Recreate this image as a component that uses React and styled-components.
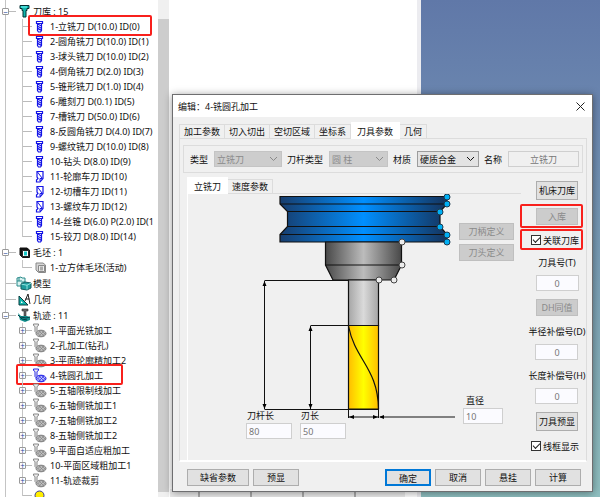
import React from 'react'
import styled, { createGlobalStyle, css } from 'styled-components'

const tools = [
  '1-立铣刀 D(10.0) ID(0)',
  '2-圆角铣刀 D(10.0) ID(1)',
  '3-球头铣刀 D(10.0) ID(2)',
  '4-倒角铣刀 D(2.0) ID(3)',
  '5-锥形铣刀 D(1.0) ID(4)',
  '6-雕刻刀 D(0.1) ID(5)',
  '7-槽铣刀 D(50.0) ID(6)',
  '8-反圆角铣刀 D(4.0) ID(7)',
  '9-螺纹铣刀 D(10.0) ID(8)',
  '10-钻头 D(8.0) ID(9)',
  '11-轮廓车刀 ID(10)',
  '12-切槽车刀 ID(11)',
  '13-螺纹车刀 ID(12)',
  '14-丝锥 D(6.0) P(2.0) ID(1',
  '15-铰刀 D(8.0) ID(14)'
]

const paths = [
  '1-平面光铣加工',
  '2-孔加工(钻孔)',
  '3-平面轮廓精加工2',
  '4-铣圆孔加工',
  '5-五轴限制线加工',
  '6-五轴侧铣加工1',
  '7-五轴侧铣加工2',
  '8-五轴侧铣加工2',
  '9-平面自适应粗加工',
  '10-平面区域粗加工1',
  '11-轨迹裁剪'
]

const holderDots = [[447, 197], [447, 204], [440, 212], [440, 227], [447, 235], [447, 242]]
const chuckDots = [[402, 242], [402, 265], [394, 280], [379, 280]]

// Icons
const HolderIcon = () => (
  <svg width="13" height="15" viewBox="0 0 13 15">
    <path d="M2 1.500h9v3H9v2H8v6.500H5V6.500H4v-2H2z" fill="#12b5ad" stroke="#042f33" />
    <path d="M3 3h6" stroke="#7ff" />
  </svg>
)

const MillIcon = () => (
  <svg width="11" height="13" viewBox="0 0 11 13">
    <path d="M2.500 1.500h6v2h-6zM3.500 3.500v7l1 1.500h2l1-1.500v-7" fill="#fff" stroke="#1414e6" strokeWidth="1.200" />
    <path d="M3.500 4l4 2M3.500 6.200l4 2M3.500 8.400l4 2" stroke="#1414e6" strokeWidth="1.200" />
  </svg>
)

const LatheIcon = () => (
  <svg width="11" height="13" viewBox="0 0 11 13">
    <path d="M3 1.500h6v7l-3 3.500H2.500v-2L4 8.500 3 7z" fill="#fff" stroke="#1414e6" strokeWidth="1.200" />
    <path d="M3.500 2l4.500 6M6 11V8.500h2.500" fill="none" stroke="#1414e6" />
  </svg>
)

const BlankIcon = ({ muted }) => (
  <svg width="13" height="13" viewBox="0 0 13 13">
    <path d="M2 2h7l2.500 2v7.500h-7L2 9z" fill={muted ? '#d6d6d6' : '#111'} stroke={muted ? '#888' : '#111'} />
    <path d="M4.500 4.500h6v6h-6z" fill={muted ? '#eee' : '#fff'} stroke={muted ? '#888' : '#222'} />
    <path d="M6 5.500h3v4H6z" fill={muted ? '#aaa' : '#17c8c8'} />
  </svg>
)

const ModelIcon = () => (
  <svg width="16" height="15" viewBox="0 0 16 15">
    <path d="M1 2l4-1 1 1h3v4H6v4H1z" fill="#d9f3f1" stroke="#2a8a8a" />
    <path d="M1 5h5M3 2v3" stroke="#2a8a8a" />
    <path d="M5 8l4-2 6 1v5l-4 2-6-1z" fill="#1d9c9c" stroke="#175e62" />
    <path d="M5.500 8.200l5.500 1 4-2M11 9v4.500" fill="none" stroke="#8fe3df" />
  </svg>
)

const GeometryIcon = () => (
  <svg width="13" height="13" viewBox="0 0 13 13">
    <path d="M1 3v9h9z" fill="#12b5ad" stroke="#063a3d" />
    <path d="M3 8v2h2z" fill="#fff" />
    <path d="M10 1L7 8M10 1l2 10M7.500 6h4" stroke="#222" fill="none" />
  </svg>
)

const PathRootIcon = () => (
  <svg width="14" height="15" viewBox="0 0 14 15">
    <path d="M5 1h6v2H9v5H7V3H5z" fill="#666" stroke="#333" strokeWidth=".6" />
    <path d="M1 5l3 3h6l3 1v3l-5 2-5-2z" fill="#128f8d" />
    <path d="M1 7l4 4 5 1M4 9l5 1 4-1" stroke="#053f45" fill="none" />
  </svg>
)

const PathIcon = ({ active }) => {
  const color = active ? '#1414e6' : '#7c7c7c'
  return (
    <svg width="15" height="15" viewBox="0 0 15 15">
      <path d="M1.500 1h5v1.500l-1.500 1v5l-1 1-1-1v-5l-1.500-1z" fill="#eee" stroke={color} strokeWidth=".9" />
      <ellipse cx="9" cy="10.500" rx="5" ry="3.300" fill={active ? '#b9bdf8' : '#bdbdbd'} stroke={color} />
      <path d="M5 9.500l4 4M7 8l5 5M9.500 7.500l4 4M5 11.500l4-4M7 13l5-5M10 13.500l3-3" stroke={color} strokeWidth=".6" />
    </svg>
  )
}

const Chevron = () => (
  <svg width="9" height="6" viewBox="0 0 9 6">
    <path d="M1 1l3.500 3.500L8 1" fill="none" stroke="currentColor" />
  </svg>
)

const ToolDrawing = () => (
  <svg width="270" height="228" viewBox="188 194 270 228" role="img" aria-label="立铣刀">
    <defs>
      <linearGradient id="holder">
        <stop offset="0" stopColor="#173d6e" />
        <stop offset=".5" stopColor="#008fff" />
        <stop offset="1" stopColor="#15335c" />
      </linearGradient>
      <linearGradient id="chuck">
        <stop offset="0" stopColor="#484848" />
        <stop offset=".5" stopColor="#bcbcbc" />
        <stop offset="1" stopColor="#484848" />
      </linearGradient>
      <linearGradient id="shank">
        <stop offset="0" stopColor="#a6a6a6" />
        <stop offset=".5" stopColor="#dadada" />
        <stop offset="1" stopColor="#a6a6a6" />
      </linearGradient>
      <linearGradient id="flute">
        <stop offset="0" stopColor="#ffbe00" />
        <stop offset=".5" stopColor="#ffff00" />
        <stop offset="1" stopColor="#ffbe00" />
      </linearGradient>
    </defs>
    <g stroke="#111" strokeWidth="1.200">
      <path d="M280 196.500H447V204L440 211.500V226.500L447 234.500V242H280V234.500L287.500 226.500V211.500L280 204Z" fill="url(#holder)" />
      <path d="M280 204H447M287.500 211.500H440M287.500 226.500H440M280 234.500H447" />
      <path d="M325.500 242H401.500V265L394 280H333L325.500 265Z" fill="url(#chuck)" />
      <path d="M325.500 265H401.500" />
      <path d="M348.500 280H378.500V325.500H348.500Z" fill="url(#shank)" />
      <path d="M348.500 325.500H378.500V409H348.500Z" fill="url(#flute)" />
      <path d="M348.500 326C355 360 378 368 378.500 409" fill="none" />
    </g>
    <g stroke="#111" fill="none">
      <path d="M264.500 280.500H348M264.500 281V409M264.500 409.500H378.500" />
      <path d="M310.500 325.500H348M310.500 326V409" />
      <path d="M348.500 409V418M378.500 409V418M349 417H378M380 417H455" />
    </g>
    <path
      d="M264.500 281l-2 5h4zM264.500 409l-2-5h4zM310.500 326l-2 5h4zM310.500 409l-2-5h4zM349 417l5-2v4zM378 417l-5-2v4zM379 417l5-2v4z"
      fill="#000"
    />
    {holderDots.map(([x, y]) => <circle key={y} cx={x} cy={y} r="3" fill="#00b0f5" stroke="#1c3a50" />)}
    {chuckDots.map(([x, y]) => <circle key={x + y} cx={x} cy={y} r="3" fill="#ececec" stroke="#444" />)}
  </svg>
)

const App = () => (
  <Screen>
    <GlobalStyle />
    <TreePane>
      <Tree>
        <li>
          <Root><Toggle aria-label="刀库">−</Toggle><HolderIcon /><span>刀库 : 15</span></Root>
          <Branch>
            {tools.map((name, i) => (
              <Leaf key={name}>
                {i > 9 && i < 13 ? <LatheIcon /> : <MillIcon />}
                <span>{name}</span>
                {i === 0 && <RowMark $left={28} $right={6} />}
              </Leaf>
            ))}
          </Branch>
        </li>
        <li>
          <Root><Toggle aria-label="毛坯">−</Toggle><BlankIcon /><span>毛坯 : 1</span></Root>
          <Branch>
            <Leaf><BlankIcon muted /><span>1-立方体毛坯(活动)</span></Leaf>
          </Branch>
        </li>
        <li><Root><Stub /><ModelIcon /><span>模型</span></Root></li>
        <li><Root><Stub /><GeometryIcon /><span>几何</span></Root></li>
        <li>
          <Root><Toggle aria-label="轨迹">−</Toggle><PathRootIcon /><span>轨迹 : 11</span></Root>
          <Branch>
            {paths.map((name, i) => (
              <Leaf key={name} $nested>
                <Toggle aria-label={name}>+</Toggle>
                <PathIcon active={i === 3} />
                <span>{name}</span>
                {i === 3 && <RowMark $left={16} $right={35} />}
              </Leaf>
            ))}
            <Leaf>
              <svg width="11" height="11" viewBox="0 0 11 11">
                <circle cx="5.500" cy="5.500" r="4.500" fill="#ffee00" stroke="#3a3aa0" />
              </svg>
            </Leaf>
          </Branch>
        </li>
      </Tree>
      <ScrollTrack><ScrollThumb /></ScrollTrack>
    </TreePane>
    <BlankPane><Cells /></BlankPane>
    <Viewport />

    <Dialog role="dialog" aria-label="编辑：4-铣圆孔加工">
      <TitleBar>
        <span>编辑：4-铣圆孔加工</span>
        <Close aria-label="关闭">
          <svg width="9" height="9" viewBox="0 0 9 9"><path d="M.5.500l8 8M8.500.500l-8 8" stroke="#222" /></svg>
        </Close>
      </TitleBar>
      <Content>
        <Tabs>
          <Tab>加工参数</Tab>
          <Tab>切入切出</Tab>
          <Tab>空切区域</Tab>
          <Tab>坐标系</Tab>
          <Tab $active>刀具参数</Tab>
          <Tab>几何</Tab>
        </Tabs>
        <Page>
          <TypeBar>
            <label htmlFor="type">类型</label>
            <SelectBox $width={68} $disabled>
              <select id="type" disabled><option>立铣刀</option></select><Chevron />
            </SelectBox>
            <label htmlFor="shank-type">刀杆类型</label>
            <SelectBox $width={59} $disabled>
              <select id="shank-type" disabled><option>圆 柱</option></select><Chevron />
            </SelectBox>
            <label htmlFor="material">材质</label>
            <SelectBox $width={62}>
              <select id="material"><option>硬质合金</option></select><Chevron />
            </SelectBox>
            <label htmlFor="name">名称</label>
            <NameInput id="name" defaultValue="立铣刀" disabled />
          </TypeBar>
          <Columns>
            <Geometry>
              <Tabs>
                <Tab $active>立铣刀</Tab>
                <Tab>速度参数</Tab>
              </Tabs>
              <Panel>
                <Drawing><ToolDrawing /></Drawing>
                <Lengths>
                  <Field>
                    <label htmlFor="shank-length">刀杆长</label>
                    <Input id="shank-length" $width={46} defaultValue="80" disabled />
                  </Field>
                  <Field>
                    <label htmlFor="edge-length">刃长</label>
                    <Input id="edge-length" $width={46} defaultValue="50" disabled />
                  </Field>
                </Lengths>
                <Define>
                  <Button disabled>刀柄定义</Button>
                  <Button disabled>刀头定义</Button>
                </Define>
                <Diameter>
                  <label htmlFor="diameter">直径</label>
                  <Input id="diameter" $width={40} defaultValue="10" disabled />
                </Diameter>
              </Panel>
            </Geometry>
            <Side>
              <Button $tall>机床刀库</Button>
              <Marked><Button disabled>入库</Button></Marked>
              <Marked>
                <Check><input type="checkbox" defaultChecked />关联刀库</Check>
              </Marked>
              <SideField>
                <label htmlFor="tool-no">刀具号(T)</label>
                <Input id="tool-no" $center $width={43} defaultValue="0" disabled />
              </SideField>
              <Button disabled>DH同值</Button>
              <SideField>
                <label htmlFor="radius-no">半径补偿号(D)</label>
                <Input id="radius-no" $center $width={43} defaultValue="0" disabled />
              </SideField>
              <SideField>
                <label htmlFor="length-no">长度补偿号(H)</label>
                <Input id="length-no" $center $width={43} defaultValue="0" disabled />
              </SideField>
              <Button $tall>刀具预显</Button>
              <Check><input type="checkbox" defaultChecked />线框显示</Check>
            </Side>
          </Columns>
        </Page>
      </Content>
      <Footer>
        <FooterButton $wide>缺省参数</FooterButton>
        <FooterButton>预显</FooterButton>
        <Spacer />
        <FooterButton $primary>确定</FooterButton>
        <FooterButton>取消</FooterButton>
        <FooterButton>悬挂</FooterButton>
        <FooterButton>计算</FooterButton>
      </Footer>
    </Dialog>
  </Screen>
)

const GlobalStyle = createGlobalStyle`
  * { box-sizing: border-box; }
  body {
    margin: 0;
    color: #111;
    font: 9px/15px 'Noto Sans', 'Noto Sans CJK SC', sans-serif;
  }
  button, input, select { font: inherit; color: inherit; margin: 0; }
  svg { display: block; flex: none; }
  ul { list-style: none; margin: 0; padding: 0; }
`

const Screen = styled.div`
  position: relative;
  display: grid;
  grid-template-columns: 170px 251px 1fr;
  height: 100vh;
  overflow: hidden;
`

// tree
const TreePane = styled.aside`
  display: grid;
  grid-template-columns: 1fr 11px 1px;
  min-height: 0;
  overflow: hidden;
  background: #fff;
`
const Tree = styled.ul`
  && { padding-top: 3px; }
  overflow: hidden;
  background: linear-gradient(#c4c4c4, #c4c4c4) 5px 0 / 1px 100% no-repeat;
  white-space: nowrap;
`
const Root = styled.div`
  display: grid;
  grid-template-columns: 13px 14px 1fr;
  column-gap: 2px;
  align-items: center;
  justify-items: start;
  height: 16px;
  padding-left: 2px;
  background: linear-gradient(#bbb, #bbb) 6px 8px / 10px 1px no-repeat;

  > svg { justify-self: center; }
`
const Branch = styled.ul``

const Leaf = styled.li`
  position: relative;
  display: flex;
  align-items: center;
  height: 15px;
  padding-left: ${props => props.$nested ? '19px' : '34px'};
  background:
    linear-gradient(#c4c4c4, #c4c4c4) 22px 0 / 1px 100% no-repeat,
    linear-gradient(#bbb, #bbb) 23px 7px / 9px 1px no-repeat;

  &:last-child {
    background-size: 1px 8px, 9px 1px;
  }
  > svg { margin-left: ${props => props.$nested ? '6px' : '0'}; }
  > span {
    position: absolute;
    left: 50px;
  }
`
const Toggle = styled.button`
  display: flex;
  align-items: center;
  justify-content: center;
  width: 7px;
  height: 7px;
  padding: 0;
  border: 1px solid #999;
  border-radius: 1px;
  background: #fff;
  color: #2b4a9c;
  font-size: 8px;
  line-height: 5px;
`
const Stub = styled.i`
  width: 7px;
`
const RowMark = styled.i`
  position: absolute;
  top: -4px;
  bottom: -2px;
  left: ${props => props.$left}px;
  right: ${props => props.$right}px;
  border: 2px solid #f8201c;
  border-radius: 2px;
`
const ScrollTrack = styled.div`
  padding: 19px 0 5px;
  background: #f0f0f0;
`
const ScrollThumb = styled.div`
  height: 100%;
  background: #cdcdcd;
`

// work area behind the dialog
const BlankPane = styled.section`
  display: flex;
  align-items: flex-end;
  border-right: 4px solid #ececf0;
  background: #fff;
`
const Cells = styled.div`
  flex: 1;
  height: 8px;
  margin-right: 12px;
  background: linear-gradient(90deg, #ebebeb 50px, #aaa 50px) -22px 0 / 52px 100%;
`
const Viewport = styled.section`
  background: linear-gradient(#6078a8, #6c88b0 25%, #86b0b8 80%, #8fbfc0);
`

// dialog
const Dialog = styled.section`
  position: absolute;
  top: 94px;
  left: 172px;
  right: 7px;
  border: 1px solid #6e6e70;
  background: #f0f0f0;
  box-shadow: 0 1px 8px rgba(0, 0, 0, .4);
`
const TitleBar = styled.header`
  display: flex;
  align-items: center;
  justify-content: space-between;
  height: 22px;
  padding: 0 7px 0 5px;
  background: #fff;
`
const Close = styled.button`
  padding: 0;
  border: 0;
  background: none;
`
const Content = styled.div`
  padding: 5px 5px 0 6px;
`
const Tabs = styled.div`
  display: flex;
  align-items: flex-end;
  height: 16px;
`
const Tab = styled.button`
  height: 14px;
  padding: 0 4px;
  border: 1px solid #dcdcdc;
  border-left-width: 0;
  border-bottom: 0;
  background: #f0f0f0;
  line-height: 13px;
  white-space: nowrap;

  &:first-child { border-left-width: 1px; }
  ${props => props.$active && css`
    position: relative;
    height: 17px;
    margin-bottom: -1px;
    padding: 0 6px;
    border-color: #fff;
    background: #fff;
    line-height: 15px;
  `}
`
const Page = styled.div`
  padding: 6px 0 0 3px;
  border: 1px solid #dcdcdc;
  border-bottom: 2px solid #fff;
`
const TypeBar = styled.div`
  display: flex;
  align-items: center;
  height: 28px;
  margin-right: 3px;
  padding: 0 3px 0 6px;
  border: 1px solid #dcdcdc;
  white-space: nowrap;

  label { margin-right: 6px; }
`
const SelectBox = styled.span`
  display: flex;
  align-items: center;
  width: ${props => props.$width}px;
  height: 16px;
  margin-right: 5px;
  padding-right: 3px;
  border: 1px solid ${props => props.$disabled ? '#c4c4c4' : '#9c9c9c'};
  background: ${props => props.$disabled ? '#cdcdcd' : '#e3e3e3'};
  color: ${props => props.$disabled ? '#8a8a8a' : '#111'};

  select {
    flex: 1;
    min-width: 0;
    padding: 0 0 0 2px;
    border: 0;
    background: none;
    appearance: none;
    opacity: 1;
  }
`
const inputBox = css`
  height: 16px;
  padding: 0 2px;
  border: 1px solid #cfcfcf;
  background: #fbfbff;
  color: #777;
`
const Input = styled.input`
  ${inputBox}
  width: ${props => props.$width}px;
  text-align: ${props => props.$center ? 'center' : 'left'};
`
const NameInput = styled.input`
  ${inputBox}
  flex: 1;
  min-width: 0;
  background: #f0f0f0;
  text-align: center;
`
const Columns = styled.div`
  display: grid;
  grid-template-columns: 1fr 58px;
  column-gap: 7px;
  padding: 4px 0 0 4px;
`
const Geometry = styled.div`
  display: flex;
  flex-direction: column;
`
const Panel = styled.div`
  flex: 1;
  display: grid;
  grid-template: 214px auto / 271px 1fr;
  border-top: 1px solid #dcdcdc;
  border-left: 1px solid #fff;
`
const Drawing = styled.div`
  grid-area: 1 / 1 / 3 / 2;
`
const Lengths = styled.div`
  grid-area: 2 / 1;
  z-index: 1;
  display: flex;
  gap: 8px;
  padding-left: 58px;
`
const Field = styled.div`
  display: flex;
  flex-direction: column;

  label { padding-left: 1px; }
`
const Define = styled.div`
  grid-area: 1 / 2;
  display: flex;
  flex-direction: column;
  gap: 4px;
  padding: 29px 7px 0 0;

  button { width: 100%; }
`
const Diameter = styled(Field)`
  grid-area: 1 / 2 / 3 / 3;
  align-self: end;
  padding: 0 0 36px 4px;

  label { padding-left: 3px; }
`
const Side = styled.div`
  display: flex;
  flex-direction: column;
  align-items: center;
  gap: 8px;
  padding: 4px 0 7px;
  white-space: nowrap;
`
const SideField = styled.div`
  display: flex;
  flex-direction: column;
  align-items: center;
  gap: 5px;
`
const Button = styled.button`
  width: 42px;
  height: ${props => props.$tall ? '19px' : '17px'};
  padding: 0;
  border: 1px solid #adadad;
  background: #e1e1e1;
  white-space: nowrap;

  &:disabled {
    border-color: #bfbfbf;
    background: #cccccc;
    color: #8a8a8a;
  }
`
const Marked = styled.div`
  position: relative;
  display: flex;
  justify-content: center;
  width: 100%;

  &::after {
    content: '';
    position: absolute;
    inset: -4px 3px -3px -8px;
    border: 2px solid #f8201c;
    border-radius: 2px;
    pointer-events: none;
  }
`
const Check = styled.label`
  display: flex;
  align-items: center;
  gap: 2px;
  height: 14px;
  margin-right: 4px;

  input {
    appearance: none;
    width: 10px;
    height: 10px;
    border: 1px solid #333;
    background: #fff;
  }
  input:checked::before {
    content: '';
    display: block;
    width: 6px;
    height: 3px;
    margin: 1px;
    border: solid #222;
    border-width: 0 0 1px 1px;
    transform: rotate(-45deg);
  }
`
const Footer = styled.footer`
  display: flex;
  gap: 4px;
  padding: 7px 11px 5px 14px;
`
const FooterButton = styled(Button)`
  width: ${props => props.$wide ? '62px' : '46px'};
  height: 17px;
  ${props => props.$primary && css`
    border: 2px solid #0078d7;
  `}
`
const Spacer = styled.div`
  flex: 1;
`

export default App
